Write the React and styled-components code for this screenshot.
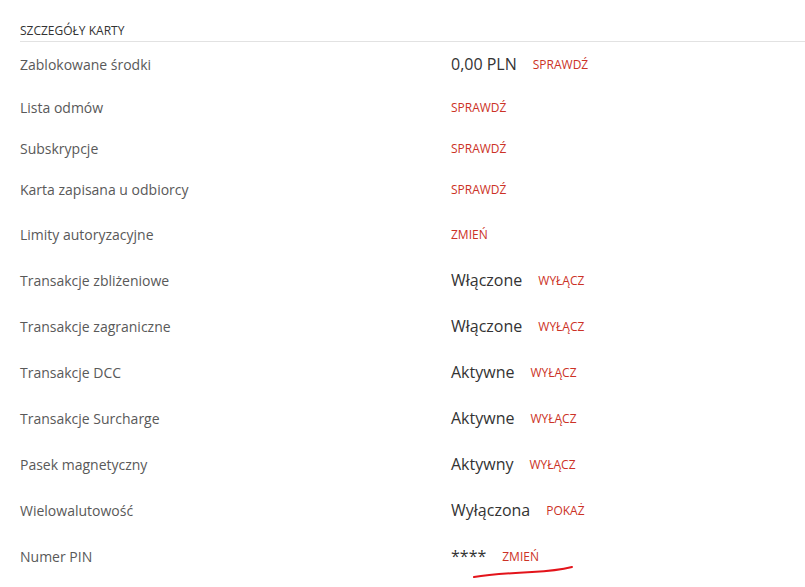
import React from 'react';
import styled, { createGlobalStyle } from 'styled-components';

const GlobalStyle = createGlobalStyle`
  body {
    margin: 0;
    background: #fff;
    font-family: "Open Sans", "Liberation Sans", sans-serif;
  }
`;

const rows = [
  { label: 'Zablokowane środki', value: '0,00 PLN', action: 'SPRAWDŹ', h: 44 },
  { label: 'Lista odmów', action: 'SPRAWDŹ', h: 42 },
  { label: 'Subskrypcje', action: 'SPRAWDŹ', h: 40 },
  { label: 'Karta zapisana u odbiorcy', action: 'SPRAWDŹ', h: 43 },
  { label: 'Limity autoryzacyjne', action: 'ZMIEŃ', h: 46 },
  { label: 'Transakcje zbliżeniowe', value: 'Włączone', action: 'WYŁĄCZ', h: 46 },
  { label: 'Transakcje zagraniczne', value: 'Włączone', action: 'WYŁĄCZ', h: 46 },
  { label: 'Transakcje DCC', value: 'Aktywne', action: 'WYŁĄCZ', h: 46 },
  { label: 'Transakcje Surcharge', value: 'Aktywne', action: 'WYŁĄCZ', h: 46 },
  { label: 'Pasek magnetyczny', value: 'Aktywny', action: 'WYŁĄCZ', h: 46 },
  { label: 'Wielowalutowość', value: 'Wyłączona', action: 'POKAŻ', h: 46 },
  { label: 'Numer PIN', value: '****', action: 'ZMIEŃ', h: 46, pin: true },
];

const Page = styled.div`
  padding: 22px 0 0 20px;
`;

const Title = styled.div`
  font-size: 12px;
  color: #333;
  padding-bottom: 2px;
  border-bottom: 1px solid #e2e2e2;
  line-height: 17px;
`;

const Row = styled.div`
  position: relative;
  display: grid;
  grid-template-columns: 431px auto;
  align-items: center;
  height: ${p => p.$h}px;
`;

const Label = styled.div`
  font-size: 14px;
  color: #595959;
`;

const ValueCell = styled.div`
  display: flex;
  align-items: center;
  gap: 16px;
`;

const Value = styled.span`
  font-size: 16px;
  color: #333;
`;

const Action = styled.a`
  font-size: 12px;
  color: #cc3226;
  cursor: pointer;
`;

const Scribble = styled.svg`
  position: absolute;
  left: 452px;
  top: 31px;
  width: 104px;
  height: 16px;
  pointer-events: none;
`;

export default function App() {
  return (
    <>
      <GlobalStyle />
      <Page>
        <Title>SZCZEGÓŁY KARTY</Title>
        {rows.map(r => (
          <Row key={r.label} $h={r.h}>
            <Label>{r.label}</Label>
            <ValueCell>
              {r.value && <Value>{r.value}</Value>}
              <Action>{r.action}</Action>
            </ValueCell>
            {r.pin && (
              <Scribble viewBox="0 0 104 16">
                <path
                  d="M2 13 C 20 10, 40 9, 60 8 S 92 5, 100 3"
                  fill="none"
                  stroke="#e3141b"
                  strokeWidth="2"
                  strokeLinecap="round"
                />
              </Scribble>
            )}
          </Row>
        ))}
      </Page>
    </>
  );
}
